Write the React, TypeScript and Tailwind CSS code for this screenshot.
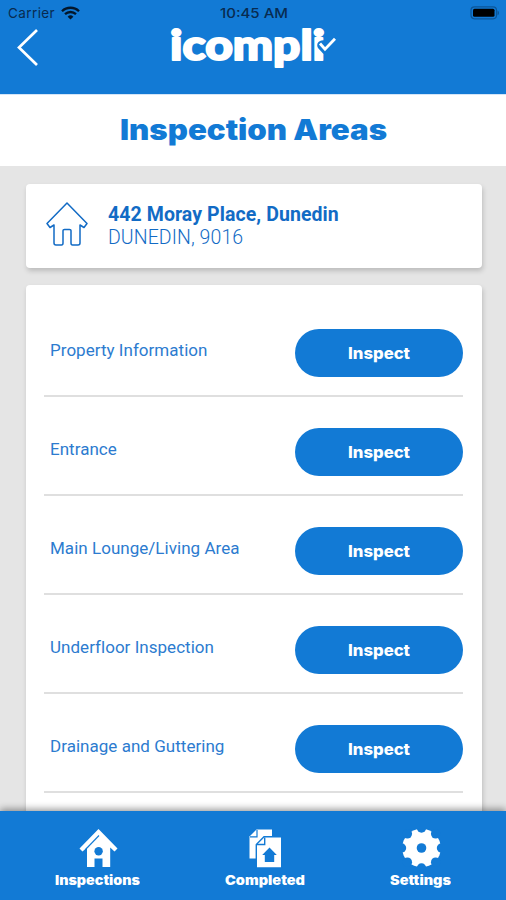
import type { ReactNode } from 'react';

const areas = [
  'Property Information',
  'Entrance',
  'Main Lounge/Living Area',
  'Underfloor Inspection',
  'Drainage and Guttering',
];

// Single line of text stretched to a fixed width, so labels keep their size in any font
type LabelProps = { x: number; y: number; width: number; size: number; weight: number; family: string; children: string };

function Label({ x, y, width, size, weight, family, children }: LabelProps) {
  return (
    <text x={x} y={y} textLength={width} lengthAdjust="spacingAndGlyphs" fontSize={size} fontWeight={weight} fontFamily={family} fill="currentColor">
      {children}
    </text>
  );
}

function StatusBar() {
  return (
    <div className="flex h-[26px] items-center justify-between pl-2 pr-[5px] font-['Inter',sans-serif] text-[13px] text-[#082b50]">
      <div className="flex w-[158px] items-center gap-[6px]">
        <span className="text-[13.5px] tracking-[0.4px]">Carrier</span>
        <svg width="19" height="14" viewBox="0 0 19 14" fill="none" stroke="#03172b" strokeWidth="2.3">
          <path d="M1 5.2a12.2 12.2 0 0 1 17 0M4 8.2a8 8 0 0 1 11 0" />
          <path d="M6.6 10.7a4.2 4.2 0 0 1 5.8 0L9.5 13.6z" fill="#03172b" stroke="none" />
        </svg>
      </div>
      <svg width="70" height="18" viewBox="0 0 70 18">
        <Label x={1} y={13.5} width={68} size={13} weight={500} family="Inter, sans-serif">10:45 AM</Label>
      </svg>
      <div className="flex w-[160px] justify-end">
        <svg width="31" height="14" viewBox="0 0 31 14">
          <rect x="1" y="0.8" width="25.5" height="12" rx="3.5" fill="none" stroke="#0b5699" strokeWidth="1.2" />
          <rect x="3" y="2.8" width="21.5" height="8" rx="1.5" fill="#000" />
          <path d="M27.5 4.5c2 .8 2 4 0 4.8z" fill="#0b5699" />
        </svg>
      </div>
    </div>
  );
}

function Logo() {
  return (
    <svg className="-mt-[8px] ml-[126px]" width="176" height="56" viewBox="166 18 176 56">
      <text x="170" y="59.8" textLength="155" lengthAdjust="spacingAndGlyphs" fontSize="42" fontWeight="900" fontFamily="Lato, sans-serif" fill="#fff" stroke="#fff" strokeWidth="2" strokeLinejoin="round">
        icompli
      </text>
      {/* tick with a blue gap that cuts into the last letter */}
      <path d="M326 40.5c-7-1.5-10.5 3-8 7.5l5.5 6 4-4z" fill="#127ad5" />
      <path d="m320 43.5 5 5.7 10-10.5" fill="none" stroke="#fff" strokeWidth="2.8" />
    </svg>
  );
}

function Header() {
  return (
    <header className="h-[94px] shrink-0 bg-[#127ad5] text-white">
      <StatusBar />
      <div className="flex pl-4">
        <svg className="mt-[1px]" width="24" height="42" viewBox="0 0 24 42" fill="none" stroke="currentColor" strokeWidth="2.7">
          <path d="M21 3 3 20.5 21 38" />
        </svg>
        <Logo />
      </div>
    </header>
  );
}

function InspectButton() {
  return (
    <button className="h-12 w-[168px] rounded-full bg-[#127ad5] text-white">
      <svg width="168" height="48" viewBox="0 0 168 48">
        <Label x={53} y={30} width={62} size={16} weight={800} family="Inter, sans-serif">Inspect</Label>
      </svg>
    </button>
  );
}

function AreaRow({ name }: { name: string }) {
  return (
    <div className="flex h-[99px] shrink-0 items-center justify-between border-b-2 border-[#dfdfdf] pl-1.5 pt-[12px]">
      <span className="mb-[4px] whitespace-nowrap font-['Roboto',sans-serif] text-[17px] tracking-[0.03px] text-[#2c7bcf]">{name}</span>
      <InspectButton />
    </div>
  );
}

function NavItem({ label, width, children }: { label: string; width: number; children: ReactNode }) {
  return (
    <a className="flex flex-col items-center">
      {children}
      <svg width={width} height="18" viewBox={`0 0 ${width} 18`}>
        <Label x={0} y={14.5} width={width} size={13} weight={900} family="Inter, sans-serif">{label}</Label>
      </svg>
    </a>
  );
}

const notches = [0, 45, 90, 135, 180, 225, 270, 315];

function GearIcon() {
  return (
    <svg width="40" height="42" viewBox="0 0 40 42">
      <circle cx="20.5" cy="20" r="19.3" fill="#fff" />
      {notches.map((angle) => (
        <circle key={angle} cx="20.5" cy="0" r="4.7" fill="#127ad5" transform={`rotate(${angle} 20.5 20)`} />
      ))}
      <circle cx="20.5" cy="20" r="4.8" fill="#127ad5" />
    </svg>
  );
}

function BottomNav() {
  return (
    <nav className="relative z-10 flex h-[89px] shrink-0 bg-[#127ad5] pl-[55px] pt-[17px] text-white shadow-[0_-2px_7px_rgba(0,0,0,0.4)]">
      <NavItem label="Inspections" width={85}>
        <svg width="40" height="42" viewBox="0 0 40 42">
          <path d="M20.5 1 39.5 20.5 36.5 23.5 32.2 19.5V39h-7.7v-8.5h-8V39H9V19.5l-4.5 4-3-3z" fill="#fff" />
          <path d="m7.5 21.5 13.5-14" fill="none" stroke="#127ad5" strokeWidth="1.1" />
          <circle cx="20.6" cy="23.3" r="4.2" fill="#127ad5" />
        </svg>
      </NavItem>
      <div className="ml-[85px]">
        <NavItem label="Completed" width={80}>
          <svg width="40" height="42" viewBox="0 0 40 42">
            <path d="M11.5 1.5h15.5v29H4.5V8.5z" fill="#fff" />
            <path d="M5 8.8h7V2" fill="none" stroke="#127ad5" strokeWidth="1.2" />
            <path d="M19 8.8h17.7V40H11.3V16.5z" fill="#fff" stroke="#127ad5" strokeWidth="1.4" />
            <path d="M12 16.5h7.7V9.5" fill="none" stroke="#127ad5" strokeWidth="1.4" />
            <path d="m24.5 19.5 7.3 7.5h-2.6v7h-9.4v-7h-2.6z" fill="#127ad5" />
          </svg>
        </NavItem>
      </div>
      <div className="ml-[85px]">
        <NavItem label="Settings" width={61}>
          <GearIcon />
        </NavItem>
      </div>
    </nav>
  );
}

export default function App() {
  return (
    <div className="flex h-[900px] w-[506px] flex-col overflow-hidden bg-[#e5e5e5]">
      <Header />
      <div className="h-[72px] shrink-0 border-t border-[#d3e5f8] bg-white text-[#127ad5]">
        <svg width="506" height="71" viewBox="0 0 506 71">
          <Label x={120} y={45} width={267} size={28} weight={900} family="Inter, sans-serif">Inspection Areas</Label>
        </svg>
      </div>
      <main className="min-h-0 flex-1 overflow-hidden pl-[26px] pr-6 pt-[18px]">
        <section className="flex h-[84px] items-center rounded-[4px] bg-white pl-5 text-[#126bc5] shadow-[1px_3px_5px_rgba(0,0,0,0.18)]">
          <svg className="-mt-[4px]" width="42" height="44" viewBox="0 0 42 44" fill="none" stroke="currentColor" strokeWidth="1.5" strokeLinejoin="round">
            <path d="M21 1 1 21.5 4 25.5 8 23v18q0 2 2 2h5.5q1.5 0 1.5-2V28.5q0-1 1.5-1h5q1.5 0 1.5 1V41q0 2 1.5 2H32q2 0 2-2V23l4 2.5 3-4z" />
          </svg>
          <div className="ml-5 font-['Roboto',sans-serif]">
            <div className="whitespace-nowrap text-[19.5px] font-bold leading-[23px] tracking-[0.08px]">442 Moray Place, Dunedin</div>
            <div className="whitespace-nowrap text-[19.5px] font-light leading-[23px] tracking-[0.08px]">DUNEDIN, 9016</div>
          </div>
        </section>
        <section className="mt-[17px] h-[600px] rounded-[4px] bg-white pl-[18px] pr-[19px] pt-[13px] shadow-[1px_3px_5px_rgba(0,0,0,0.18)]">
          {areas.map((name) => (
            <AreaRow key={name} name={name} />
          ))}
        </section>
      </main>
      <BottomNav />
    </div>
  );
}
